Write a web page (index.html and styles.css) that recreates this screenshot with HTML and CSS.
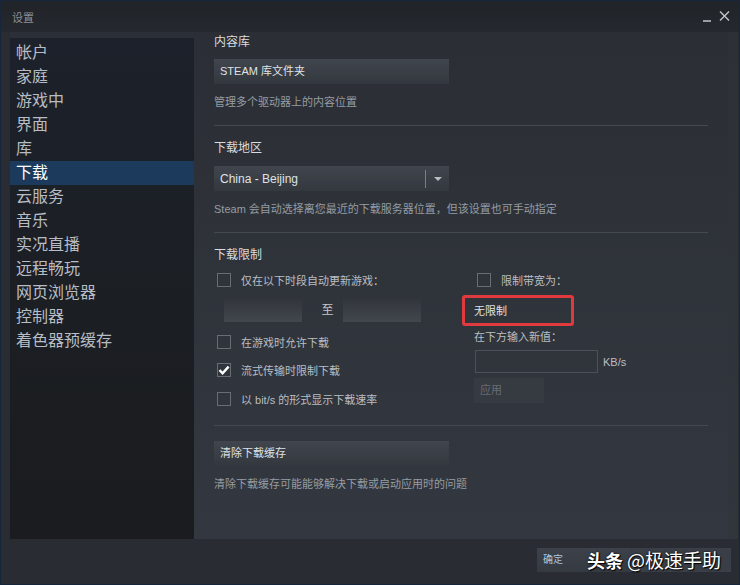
FILE: index.html
```html
<!DOCTYPE html>
<html lang="zh-CN">
<head>
    <meta charset="UTF-8">
    <title>设置</title>
    <link rel="stylesheet" href="styles.css">
</head>
<body>
    <div class="window">
        <div class="titlebar">
            <span class="title">设置</span>
            <div class="controls">
                <span class="min"></span>
                <svg class="close" width="11" height="10" viewBox="0 0 11 10">
                    <path d="M1 0.5 L10 9.5 M10 0.5 L1 9.5" stroke="#c3c6ca" stroke-width="1.4"/>
                </svg>
            </div>
        </div>

        <div class="main">
            <ul class="sidebar">
                <li>帐户</li>
                <li>家庭</li>
                <li>游戏中</li>
                <li>界面</li>
                <li>库</li>
                <li class="active">下载</li>
                <li>云服务</li>
                <li>音乐</li>
                <li>实况直播</li>
                <li>远程畅玩</li>
                <li>网页浏览器</li>
                <li>控制器</li>
                <li>着色器预缓存</li>
            </ul>

            <div class="content">
                <div class="heading first">内容库</div>
                <div class="btn wide">STEAM 库文件夹</div>
                <div class="desc">管理多个驱动器上的内容位置</div>
                <div class="sep"></div>

                <div class="heading">下载地区</div>
                <div class="dropdown">
                    <span class="value">China - Beijing</span>
                    <span class="divider"></span>
                    <span class="arrow"></span>
                </div>
                <div class="desc">Steam 会自动选择离您最近的下载服务器位置，但该设置也可手动指定</div>
                <div class="sep"></div>

                <div class="heading">下载限制</div>
                <div class="limits">
                    <div class="col-left">
                        <label class="check"><span class="box"></span>仅在以下时段自动更新游戏：</label>
                        <div class="time-row">
                            <span class="time-input"></span>
                            <span class="to">至</span>
                            <span class="time-input"></span>
                        </div>
                        <label class="check r1"><span class="box"></span>在游戏时允许下载</label>
                        <label class="check r2"><span class="box checked">
                            <svg width="14" height="14" viewBox="0 0 14 14"><path d="M2.5 7.2 L5.6 10.3 L11.6 3.6" fill="none" stroke="#fff" stroke-width="2.4"/></svg>
                        </span>流式传输时限制下载</label>
                        <label class="check r3"><span class="box"></span>以 bit/s 的形式显示下载速率</label>
                    </div>
                    <div class="col-right">
                        <label class="check"><span class="box"></span>限制带宽为：</label>
                        <div class="current">无限制<span class="mark"></span></div>
                        <div class="hint">在下方输入新值：</div>
                        <div class="rate-row">
                            <span class="rate-input"></span>
                            <span class="unit">KB/s</span>
                        </div>
                        <div class="btn apply">应用</div>
                    </div>
                </div>
                <div class="sep low"></div>

                <div class="btn wide clear">清除下载缓存</div>
                <div class="desc">清除下载缓存可能能够解决下载或启动应用时的问题</div>
            </div>

            <div class="scroll"></div>
        </div>

        <div class="footer">
            <div class="btn small ok">确定</div>
            <div class="btn small cancel"></div>
            <div class="watermark">头条 <span class="handle">@极速手助</span></div>
        </div>
    </div>
</body>
</html>
```

FILE: styles.css
```css
* {
    box-sizing: border-box;
}
body {
    margin: 0;
    width: 740px;
    height: 585px;
    background: #1a2a40;
    font-family: 'Liberation Sans', 'Noto Sans CJK SC', sans-serif;
    overflow: hidden;
}
.window {
    width: 740px;
    height: 585px;
    border: 1px solid #17263a;
    background: #292c32;
    display: flex;
    flex-direction: column;
}

/* title bar */
.titlebar {
    height: 31px;
    display: flex;
    align-items: center;
    justify-content: space-between;
    padding: 0 9px 0 11px;
    background: linear-gradient(#202328, #25282e);
}
.title {
    font-size: 11px;
    color: #8b9098;
    margin-top: 1px;
}
.controls {
    display: flex;
    align-items: center;
    gap: 8px;
}
.min {
    width: 8px;
    height: 2px;
    background: #9a9ea4;
    margin-top: 8px;
}
.close {
    margin-top: -2px;
}

/* sidebar + content */
.main {
    display: flex;
    height: 507px;
    padding-left: 9px;
}
.sidebar {
    list-style: none;
    margin: 0;
    padding: 3px 0 0;
    width: 184px;
    border-top: 6px solid #2b2f37;
    background: linear-gradient(#1c212b, #1b1e22 60%, #1a1c1f);
}
.sidebar li {
    height: 24px;
    line-height: 24px;
    padding-left: 6px;
    font-size: 16px;
    color: #b7bdc4;
}
.sidebar li.active {
    background: #1c3a5b;
    color: #fff;
}
.content {
    width: 534px;
    padding: 0 20px 0 20px;
    background: linear-gradient(#2b2e34, #2f333a 50%, #33373f);
}
.scroll {
    width: 10px;
    background: linear-gradient(#2d3137, #31353c);
}
.heading {
    font-size: 12px;
    line-height: 18px;
    color: #d9dcdf;
    margin-top: 13px;
}
.heading.first {
    margin-top: 1px;
}
.desc {
    font-size: 11px;
    line-height: 16px;
    color: #959ca3;
    margin-top: 10px;
}
.sep {
    height: 1px;
    background: #45494f;
    margin-top: 15px;
}
.sep.low {
    margin-top: 18px;
}
.btn {
    height: 25px;
    line-height: 25px;
    padding-left: 6px;
    font-size: 11px;
    color: #dfe2e5;
    background: linear-gradient(#41454d, #33373e);
}
.btn.wide {
    width: 235px;
    margin-top: 8px;
}
.btn.clear {
    margin-top: 15px;
}

/* region dropdown */
.dropdown {
    width: 235px;
    height: 25px;
    margin-top: 9px;
    display: flex;
    align-items: center;
    padding-left: 6px;
    background: linear-gradient(#41454d, #33373e);
}
.dropdown .value {
    flex: 1;
    font-size: 12px;
    color: #dfe2e5;
}
.dropdown .divider {
    width: 1px;
    height: 18px;
    background: #7b8087;
}
.dropdown .arrow {
    margin: 1px 7px 0 8px;
    border-left: 4px solid transparent;
    border-right: 4px solid transparent;
    border-top: 4px solid #b9bdc2;
}

/* download limits */
.limits {
    display: flex;
    margin-top: 8px;
}
.col-left {
    width: 260px;
    display: flex;
    flex-direction: column;
}
.col-right {
    display: flex;
    flex-direction: column;
    position: relative;
}
.check {
    display: flex;
    align-items: center;
    height: 16px;
    font-size: 11px;
    color: #b9bec4;
}
.box {
    width: 14px;
    height: 14px;
    margin: 0 10px 0 3px;
    border: 1px solid #686c73;
    position: relative;
}
.box svg {
    position: absolute;
    left: -1px;
    top: -1px;
}
.check.r1 {
    margin-top: 12px;
}
.check.r2 {
    margin-top: 12px;
}
.check.r3 {
    margin-top: 13px;
}
.time-row {
    display: flex;
    margin-top: 11px;
    padding-left: 10px;
}
.time-input {
    width: 78px;
    height: 23px;
    background: linear-gradient(#32353c, #42464d);
}
.to {
    width: 41px;
    padding-left: 10px;
    text-align: center;
    line-height: 23px;
    font-size: 12px;
    color: #c4c8cc;
}
.current {
    position: relative;
    margin-top: 15px;
    font-size: 11px;
    line-height: 16px;
    color: #dfe2e5;
}
.mark {
    position: absolute;
    left: -12px;
    top: -8px;
    width: 112px;
    height: 31px;
    border: 3px solid #e0393e;
    border-radius: 3px;
}
.hint {
    margin-top: 10px;
    font-size: 11px;
    line-height: 16px;
    color: #b9bec4;
}
.rate-row {
    display: flex;
    align-items: center;
    margin-top: 5px;
    padding-left: 1px;
}
.rate-input {
    width: 123px;
    height: 23px;
    border: 1px solid #4c5058;
    background: #30343b;
}
.unit {
    margin-left: 5px;
    font-size: 11px;
    color: #b9bec4;
}
.btn.apply {
    width: 70px;
    margin-top: 5px;
    padding-left: 6px;
    color: #686d74;
    background: #363a41;
}

/* bottom buttons */
.footer {
    flex: 1;
    display: flex;
    justify-content: flex-end;
    padding: 9px 8px 0 0;
    position: relative;
}
.btn.small {
    height: 24px;
    line-height: 24px;
    font-size: 10px;
    color: #a6c8e6;
    background: linear-gradient(#3d4149, #353940);
}
.btn.ok {
    width: 92px;
}
.btn.cancel {
    width: 102px;
    background: #3a3e46;
}
.watermark {
    position: absolute;
    left: 586px;
    top: 9px;
    height: 24px;
    line-height: 24px;
    font-size: 18px;
    font-weight: bold;
    color: #fff;
    text-shadow: 1px 1px 1px #000, 0 0 2px #000;
    font-family: 'Noto Sans CJK SC', sans-serif;
}
.handle {
    font-size: 19px;
    font-weight: normal;
}
```
